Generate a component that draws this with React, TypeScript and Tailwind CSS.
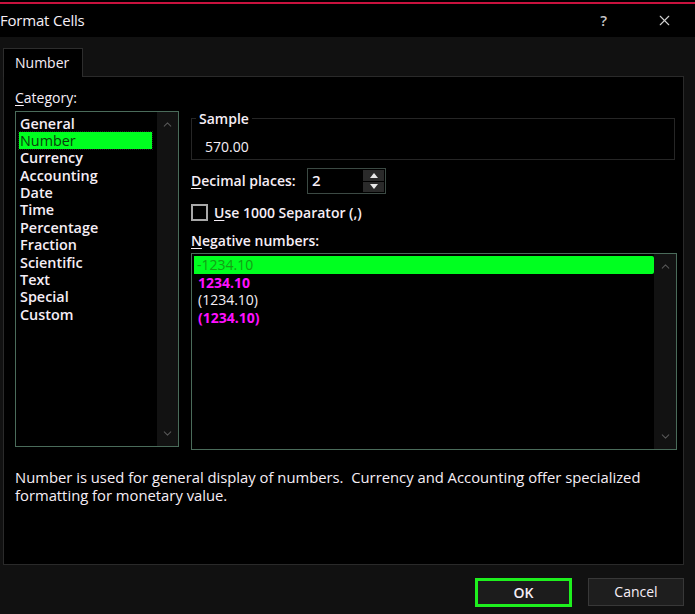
import { ChevronUp, ChevronDown, X } from "lucide-react"

const categories = [
  "General",
  "Number",
  "Currency",
  "Accounting",
  "Date",
  "Time",
  "Percentage",
  "Fraction",
  "Scientific",
  "Text",
  "Special",
  "Custom",
]

function ScrollTrack({ className }: { className?: string }) {
  return (
    <div className={`flex flex-col justify-between items-center bg-[#121212] py-[6px] ${className ?? ""}`}>
      <ChevronUp className="w-[13px] h-[13px] text-[#555]" strokeWidth={2} />
      <ChevronDown className="w-[13px] h-[13px] text-[#555]" strokeWidth={2} />
    </div>
  )
}

export default function App() {
  return (
    <div
      className="w-[695px] h-[614px] bg-[#111] flex flex-col text-[#f6eef6] text-[14px] leading-[17.5px] overflow-hidden"
      style={{ fontFamily: '"Open Sans", "Noto Sans", sans-serif' }}
    >
      {/* window frame */}
      <div className="h-[2px] bg-black" />
      <div className="h-[2px] bg-[#c8123e]" />

      {/* Title bar */}
      <div className="h-[33px] bg-black flex items-center">
        <span className="text-[15px] tracking-[-0.2px]">Format Cells</span>
        <span className="ml-auto mr-[49px] text-[15px] font-semibold text-[#c8c8c8]">?</span>
        <X className="w-[17px] h-[17px] mr-[22px] text-[#d0d0d0]" strokeWidth={1.6} />
      </div>

      {/* Tabs */}
      <div className="pt-[10px] pl-[3px] flex">
        <div className="w-[80px] h-[29px] bg-black border border-b-0 border-[#2d2d2d] pl-[11px] pt-[5px] relative top-[1px] z-10">
          Number
        </div>
      </div>

      {/* Panel */}
      <div className="ml-[3px] w-[681px] h-[489px] bg-black border border-[#2a2a2a] pl-[11px] pt-[12px] flex flex-col">
        <div className="flex">
          {/* Category column */}
          <div className="w-[164px] flex flex-col">
            <div>
              <span className="underline underline-offset-2">C</span>ategory:
            </div>
            <div className="mt-[4px] h-[336px] border-[1.5px] border-[#4a6b5a] flex">
              <div className="flex-1 pl-[3px] pt-[3px] flex flex-col text-[14.4px]">
                {categories.map((c) => (
                  <div
                    key={c}
                    className={
                      c === "Number"
                        ? "h-[17.4px] w-[133px] bg-[#00ff20] text-[#0b3d0b] pl-[1px] outline outline-1 outline-dotted outline-[#222]"
                        : "h-[17.4px] pl-[1px] font-semibold"
                    }
                  >
                    {c}
                  </div>
                ))}
              </div>
              <ScrollTrack className="w-[21px]" />
            </div>
          </div>

          {/* Right column */}
          <div className="ml-[12px] w-[486px] flex flex-col pt-[21px]">
            <fieldset className="h-[50px] w-[484px] border border-[#262626] pl-[4px]">
              <legend className="px-[3px] font-semibold">Sample</legend>
              <div className="pl-[9px] pt-[10px]">570.00</div>
            </fieldset>

            <div className="mt-[8px] flex items-center h-[26px]">
              <span className="w-[116px] font-semibold">
                <span className="underline underline-offset-2">D</span>ecimal places:
              </span>
              <div className="w-[79px] h-[26px] border-[1.5px] border-[#3c4a44] flex items-center">
                <span className="flex-1 pl-[4px] text-[15px] font-semibold">2</span>
                <div className="w-[21px] h-[22px] mr-[1px] flex flex-col gap-[1px]">
                  <div className="flex-1 bg-[#2a2a2a] flex items-center justify-center">
                    <svg width="8" height="5" viewBox="0 0 8 5">
                      <path d="M0 5 L4 0 L8 5 Z" fill="#e8e8e8" />
                    </svg>
                  </div>
                  <div className="flex-1 bg-[#2a2a2a] flex items-center justify-center">
                    <svg width="8" height="5" viewBox="0 0 8 5">
                      <path d="M0 0 L4 5 L8 0 Z" fill="#e8e8e8" />
                    </svg>
                  </div>
                </div>
              </div>
            </div>

            <div className="mt-[10px] flex items-center h-[17px]">
              <div className="w-[17px] h-[17px] border-2 border-[#a8a8a8]" />
              <span className="ml-[6px] font-semibold">
                <span className="underline underline-offset-2">U</span>se 1000 Separator (,)
              </span>
            </div>

            <div className="mt-[11px] font-semibold">
              <span className="underline underline-offset-2">N</span>egative numbers:
            </div>

            <div className="mt-[3px] h-[197px] w-[486px] border-[1.5px] border-[#4a6b5a] flex">
              <div className="flex-1 pl-[2px] pt-[2px] flex flex-col">
                <div className="h-[18px] bg-[#00ff20] text-[#14a014] pl-[3px] rounded-r-[2px]">-1234.10</div>
                <div className="h-[17.5px] pl-[4px] text-[#ff10ff] font-bold">1234.10</div>
                <div className="h-[17.5px] pl-[4px]">(1234.10)</div>
                <div className="h-[17.5px] pl-[4px] text-[#ff10ff] font-bold">(1234.10)</div>
              </div>
              <ScrollTrack className="w-[22px]" />
            </div>
          </div>
        </div>

        <p className="mt-[18px] w-[660px] text-[14.8px] leading-[18px]">
          Number is used for general display of numbers.&nbsp; Currency and Accounting offer specialized
          <br />
          formatting for monetary value.
        </p>
      </div>

      {/* Buttons */}
      <div className="flex justify-end pr-[11px] pt-[13px] gap-[16px]">
        <button className="w-[97px] h-[29px] bg-[#1c1c1c] border-[3px] border-[#1ef01e] font-semibold">OK</button>
        <button className="w-[96px] h-[28px] bg-[#1e1e1e] border border-[#383838]">Cancel</button>
      </div>
    </div>
  )
}
